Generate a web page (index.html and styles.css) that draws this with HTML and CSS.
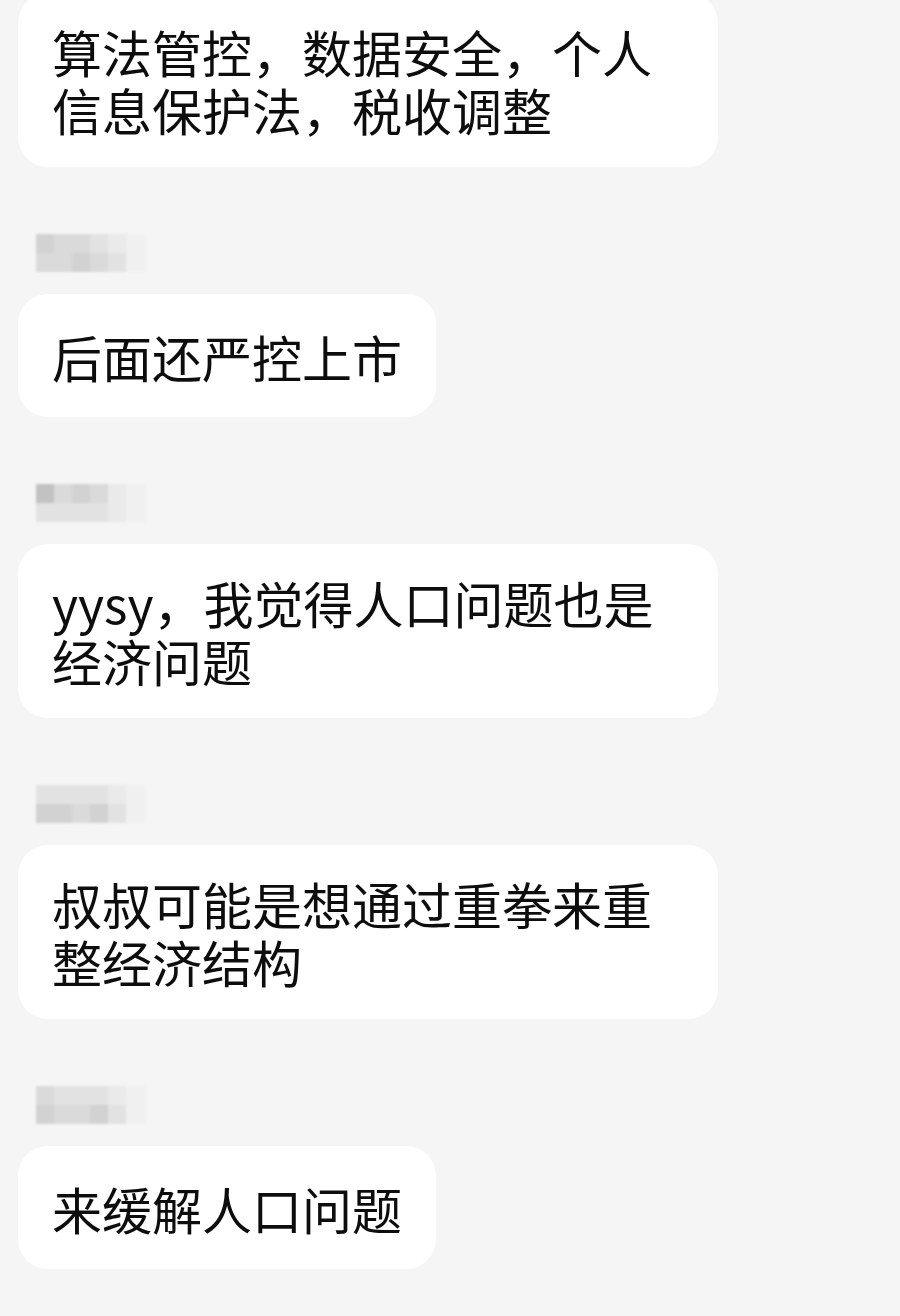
FILE: index.html
```html
<!DOCTYPE html>
<html lang="zh-CN">
<head>
  <meta charset="UTF-8" />
  <meta name="viewport" content="width=device-width, initial-scale=1.0" />
  <title>聊天记录</title>
  <link rel="stylesheet" href="styles.css">
</head>
<body>
  <div class="chat">
    <div class="msg">
      <div class="bubble">算法管控，数据安全，个人信息保护法，税收调整</div>
    </div>

    <div class="msg">
      <div class="name mosaic" aria-hidden="true">
        <span class="c2"></span><span class="c3"></span><span class="c3"></span><span class="c4"></span><span class="c5"></span><span class="c6"></span>
        <span class="c3"></span><span class="c3"></span><span class="c2"></span><span class="c3"></span><span class="c4"></span><span class="c6"></span>
      </div>
      <div class="bubble">后面还严控上市</div>
    </div>

    <div class="msg">
      <div class="name mosaic" aria-hidden="true">
        <span class="c1"></span><span class="c3"></span><span class="c2"></span><span class="c3"></span><span class="c5"></span><span class="c6"></span>
        <span class="c4"></span><span class="c4"></span><span class="c4"></span><span class="c4"></span><span class="c5"></span><span class="c6"></span>
      </div>
      <div class="bubble">yysy，我觉得人口问题也是经济问题</div>
    </div>

    <div class="msg">
      <div class="name mosaic" aria-hidden="true">
        <span class="c4"></span><span class="c4"></span><span class="c4"></span><span class="c4"></span><span class="c5"></span><span class="c6"></span>
        <span class="c2"></span><span class="c2"></span><span class="c3"></span><span class="c2"></span><span class="c4"></span><span class="c6"></span>
      </div>
      <div class="bubble">叔叔可能是想通过重拳来重整经济结构</div>
    </div>

    <div class="msg">
      <div class="name mosaic" aria-hidden="true">
        <span class="c3"></span><span class="c4"></span><span class="c4"></span><span class="c4"></span><span class="c5"></span><span class="c6"></span>
        <span class="c2"></span><span class="c3"></span><span class="c3"></span><span class="c2"></span><span class="c4"></span><span class="c6"></span>
      </div>
      <div class="bubble">来缓解人口问题</div>
    </div>
  </div>
</body>
</html>
```

FILE: styles.css
```css
body {
  margin: 0;
  padding: 0;
  background-color: #f5f5f5;
  font-family: "Noto Sans CJK SC", "Noto Sans", sans-serif;
  color: #0d0d0d;
  overflow: hidden;
}
.chat {
  display: flex;
  flex-direction: column;
  gap: 67px;
  padding: 0 18px;
  margin-top: -7px;
}
.msg {
  display: flex;
  flex-direction: column;
  align-items: flex-start;
  gap: 22px;
}
.bubble {
  display: flex;
  align-items: center;
  background: white;
  border-radius: 30px;
  padding: 29px 34px;
  min-height: 123px;
  max-width: 700px;
  box-sizing: border-box;
  font-size: 50px;
  line-height: 58px;
}
.mosaic {
  display: grid;
  grid-template-columns: repeat(5, 18px) 20px;
  grid-template-rows: 19px 19px;
  margin-left: 18px;
  filter: blur(1px);
}
.c1 { background: #c2c2c2; }
.c2 { background: #d2d2d2; }
.c3 { background: #dadada; }
.c4 { background: #e2e2e2; }
.c5 { background: #eaeaea; }
.c6 { background: #f0f0f0; }
```
